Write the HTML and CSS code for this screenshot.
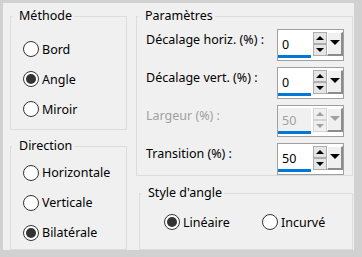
FILE: index.html
```html
<!DOCTYPE html>
<html lang="fr">
<head>
    <meta charset="UTF-8">
    <title>Angle</title>
    <link rel="stylesheet" href="styles.css">
</head>
<body>
    <div class="dialog">
        <div class="col-left">
            <div class="group group-method">
                <span class="group-title">Méthode</span>
                <div class="radio"><span class="dot"></span>Bord</div>
                <div class="radio checked"><span class="dot"></span>Angle</div>
                <div class="radio"><span class="dot"></span>Miroir</div>
            </div>
            <div class="group group-direction">
                <span class="group-title">Direction</span>
                <div class="radio"><span class="dot"></span>Horizontale</div>
                <div class="radio"><span class="dot"></span>Verticale</div>
                <div class="radio checked"><span class="dot"></span>Bilatérale</div>
            </div>
        </div>
        <div class="col-right">
            <div class="group group-params">
                <span class="group-title">Paramètres</span>
                <div class="field">
                    <span class="field-label">Décalage horiz. (%) :</span>
                    <div class="spin">
                        <div class="spin-value">0</div>
                        <div class="spin-arrows"><span class="arrow up"></span><span class="arrow down"></span></div>
                        <div class="spin-drop"></div>
                    </div>
                </div>
                <div class="field">
                    <span class="field-label">Décalage vert. (%) :</span>
                    <div class="spin">
                        <div class="spin-value">0</div>
                        <div class="spin-arrows"><span class="arrow up"></span><span class="arrow down"></span></div>
                        <div class="spin-drop"></div>
                    </div>
                </div>
                <div class="field disabled">
                    <span class="field-label">Largeur (%) :</span>
                    <div class="spin">
                        <div class="spin-value">50</div>
                        <div class="spin-arrows"><span class="arrow up"></span><span class="arrow down"></span></div>
                        <div class="spin-drop"></div>
                    </div>
                </div>
                <div class="field">
                    <span class="field-label">Transition (%) :</span>
                    <div class="spin">
                        <div class="spin-value">50</div>
                        <div class="spin-arrows"><span class="arrow up"></span><span class="arrow down"></span></div>
                        <div class="spin-drop"></div>
                    </div>
                </div>
            </div>
            <div class="group group-style">
                <span class="group-title">Style d'angle</span>
                <div class="radio-row">
                    <div class="radio checked linear"><span class="dot"></span>Linéaire</div>
                    <div class="radio"><span class="dot"></span>Incurvé</div>
                </div>
            </div>
        </div>
    </div>
</body>
</html>
```

FILE: styles.css
```css
/* Basic Reset */
* {
    margin: 0;
    padding: 0;
    box-sizing: border-box;
}
body {
    font-family: 'Noto Sans', sans-serif;
    font-size: 12.5px;
    color: #000;
    background: #d1d1d1;
}
.dialog {
    margin: 3px 0 0 3px;
    width: 351px;
    height: 247px;
    padding: 13px 0 0 7px;
    background: #f0f0f0;
    overflow: hidden;
    display: flex;
    gap: 9px;
}
.col-left {
    width: 117px;
    flex-shrink: 0;
    display: flex;
    flex-direction: column;
    gap: 16px;
}
.col-right {
    width: 217px;
    flex-shrink: 0;
    display: flex;
    flex-direction: column;
    gap: 17px;
}
.group {
    position: relative;
    border: 1px solid #dcdcdc;
}
.group-title {
    position: absolute;
    left: 1px;
    top: -10px;
    padding: 0 2px 0 7px;
    line-height: 18px;
    background: #f0f0f0;
}
.group-method {
    height: 120px;
    padding: 17px 0 0 12px;
}
.group-direction {
    height: 110px;
    padding: 11px 0 0 12px;
}
.radio {
    display: flex;
    align-items: center;
    height: 30px;
}
.dot {
    width: 16px;
    height: 16px;
    margin-right: 3px;
    border: 1px solid #333;
    border-radius: 50%;
    background: #fff;
    display: flex;
    align-items: center;
    justify-content: center;
}
.radio.checked .dot::after {
    content: "";
    width: 10px;
    height: 10px;
    border-radius: 50%;
    background: #333;
}

/* Parametres */
.group-params {
    height: 170px;
    padding: 12px 0 0 9px;
    display: flex;
    flex-direction: column;
    gap: 6px;
}
.field {
    display: flex;
    align-items: flex-start;
    height: 32px;
}
.field-label {
    width: 131px;
    margin-top: 2px;
    line-height: 18px;
}
.spin {
    width: 67px;
    height: 32px;
    border: 1px solid #a0a0a0;
    padding: 2px 0 0 0;
    background: #fff;
    display: flex;
    align-items: flex-start;
}
.spin-value {
    width: 33px;
    height: 26px;
    padding: 4px 0 0 4px;
    line-height: 18px;
    border-bottom: 3px solid #0078d7;
}
.spin-arrows {
    margin-left: 2px;
    display: flex;
    flex-direction: column;
}
.arrow {
    width: 14px;
    height: 12px;
    border: 1px solid #adadad;
    background: #e5e5e5;
    display: flex;
    align-items: center;
    justify-content: center;
}
.arrow::after {
    content: "";
    border-left: 4px solid transparent;
    border-right: 4px solid transparent;
}
.arrow.up::after {
    border-bottom: 4px solid #000;
}
.arrow.down::after {
    border-top: 4px solid #000;
}
.spin-drop {
    width: 16px;
    height: 24px;
    background: #f0f0f0;
    border-top: 1px solid #fff;
    border-left: 1px solid #fff;
    border-right: 2px solid #8c8c8c;
    border-bottom: 2px solid #8c8c8c;
    display: flex;
    justify-content: center;
    padding-top: 7px;
}
.spin-drop::after {
    content: "";
    height: 0;
    border-left: 5px solid transparent;
    border-right: 5px solid transparent;
    border-top: 5px solid #000;
}
.field.disabled .field-label,
.field.disabled .spin-value {
    color: #a0a0a0;
}
.field.disabled .spin-value {
    background: #f0f0f0;
}
.field.disabled .arrow {
    border-color: #d4d4d4;
    background: #f0f0f0;
}
.field.disabled .arrow.up::after {
    border-bottom-color: #a0a0a0;
}
.field.disabled .arrow.down::after {
    border-top-color: #a0a0a0;
}
.field.disabled .spin-drop::after {
    border-top-color: #a0a0a0;
}

/* Style d'angle */
.group-style {
    margin-left: 3px;
    height: 60px;
    padding: 13px 0 0 24px;
}
.radio-row {
    display: flex;
}
.radio.linear {
    width: 98px;
}
```
